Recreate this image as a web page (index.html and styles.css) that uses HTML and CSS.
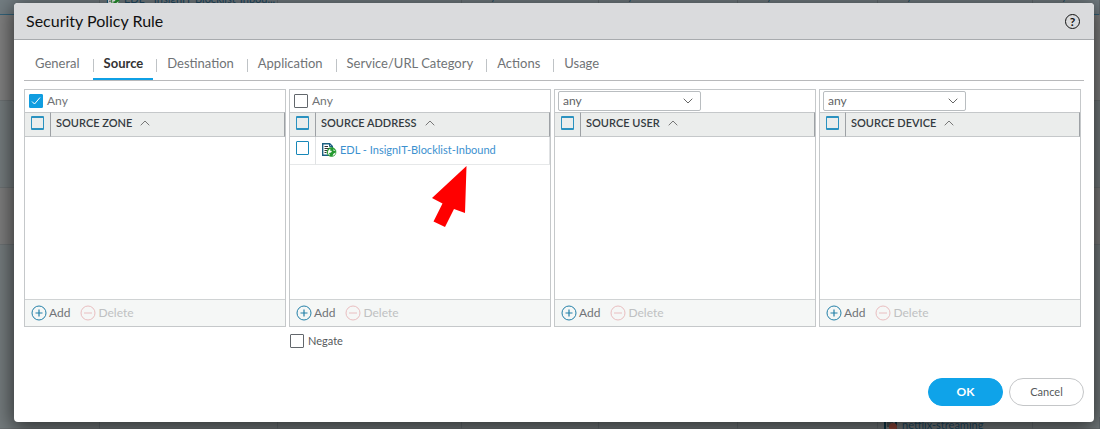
FILE: index.html
```
<!DOCTYPE html>
<html lang="en">
<head>
<meta charset="utf-8">
<meta name="viewport" content="width=device-width, initial-scale=1">
<title>Security Policy Rule</title>
<link rel="stylesheet" href="styles.css">
</head>
<body>
<svg class="sprite" aria-hidden="true">
  <symbol id="caret-up" viewBox="0 0 10 6"><path d="M.7 5.3 5 1l4.300 4.300" fill="none" stroke="currentColor"/></symbol>
  <symbol id="plus" viewBox="0 0 16 16"><circle cx="8" cy="8" r="7" fill="none" stroke="currentColor"/><path d="M4.500 8h7M8 4.500v7" fill="none" stroke="currentColor" stroke-width="1.200"/></symbol>
  <symbol id="minus" viewBox="0 0 16 16"><circle cx="8" cy="8" r="7" fill="none" stroke="currentColor"/><path d="M4 8h8" fill="none" stroke="currentColor"/></symbol>
  <symbol id="list-globe" viewBox="0 0 16 16">
    <path d="M1.700 1.700h7l2.600 2.600v9H1.700z" fill="#fff" stroke="#1a5f80" stroke-width="1.400"/>
    <path d="M8.500 1.500v3h3" fill="none" stroke="#1a5f80"/>
    <path d="M3.500 4.500h3.500M3.500 6.500h5M3.500 8.500h3M3.500 10.500h2" stroke="#333" fill="none"/>
    <circle cx="10.500" cy="10" r="4.500" fill="#249a2f" stroke="#249a2f" stroke-width=".6"/>
    <path d="M7 10.500c0-2 1-3.200 2.500-3.700L9 8.500l2 .5-1 1.500-2 .5 1 2.500C7.700 13 7 12 7 10.500zM12.500 7l1.700 2-1.700-.3zM11.500 13.800l1-2 2-1.300c0 1.700-1.300 3-3 3.300z" fill="#fff"/>
  </symbol>
</svg>

<div class="backdrop" aria-hidden="true">
  <div class="row row-top">
    <span></span><span></span><span class="cut"><svg class="doc"><use href="#list-globe"/></svg>EDL - InsignIT-Blocklist-Inbou...</span><span>any</span><span>any</span><span>any</span><span>any</span><span>any</span>
  </div>
  <div class="row row-a"></div>
  <div class="row row-b"></div>
  <div class="row row-c"></div>
  <div class="row row-d"></div>
  <div class="row row-end">
    <span></span><span></span><span></span><span></span><span></span><span></span><span class="app"><svg class="doc" viewBox="0 0 14 14"><path d="M1 1h11v12H1z" fill="none" stroke="#0e3648" stroke-width="2"/><path d="M3 4h6M3 6h4M3 8h3" stroke="#1d2c30"/><circle cx="9" cy="9" r="4" fill="#93483a"/></svg>netflix-streaming</span><span></span>
  </div>
</div>

<main class="dialog" role="dialog" aria-labelledby="dialog-title">
  <header class="dialog-head">
    <h1 id="dialog-title">Security Policy Rule</h1>
    <button class="help" aria-label="Help">?</button>
  </header>
  <div class="dialog-body">
    <nav class="tabs" role="tablist">
      <button class="tab" role="tab">General</button>
      <button class="tab active" role="tab" aria-selected="true">Source</button>
      <button class="tab" role="tab">Destination</button>
      <button class="tab" role="tab">Application</button>
      <button class="tab" role="tab">Service/URL Category</button>
      <button class="tab" role="tab">Actions</button>
      <button class="tab" role="tab">Usage</button>
    </nav>

    <div class="panels">
      <section class="panel">
        <div class="panel-top"><label class="any"><input type="checkbox" class="check" checked>Any</label></div>
        <div class="panel-list">
          <table>
            <thead><tr><th class="pick"><input type="checkbox" class="check blue" aria-label="Select all zones"></th><th><span class="sort">Source Zone<svg><use href="#caret-up"/></svg></span></th></tr></thead>
          </table>
        </div>
        <footer class="panel-foot"><button class="add"><svg><use href="#plus"/></svg>Add</button><button class="delete" disabled><svg><use href="#minus"/></svg>Delete</button></footer>
      </section>

      <section class="panel">
        <div class="panel-top"><label class="any"><input type="checkbox" class="check">Any</label></div>
        <div class="panel-list">
          <table>
            <thead><tr><th class="pick"><input type="checkbox" class="check blue" aria-label="Select all addresses"></th><th><span class="sort">Source Address<svg><use href="#caret-up"/></svg></span></th></tr></thead>
            <tbody><tr><td class="pick"><input type="checkbox" class="check blue" aria-label="Select EDL - InsignIT-Blocklist-Inbound"></td><td><a class="entry" href="#"><svg><use href="#list-globe"/></svg>EDL - InsignIT-Blocklist-Inbound</a></td></tr></tbody>
          </table>
          <svg class="pointer" viewBox="0 0 36 63" aria-hidden="true"><path d="M34.500 1 33 48l-11-4-9 18-11.500-5.500 9-18L0 33z" fill="#f00"/></svg>
        </div>
        <footer class="panel-foot"><button class="add"><svg><use href="#plus"/></svg>Add</button><button class="delete" disabled><svg><use href="#minus"/></svg>Delete</button></footer>
      </section>

      <section class="panel">
        <div class="panel-top"><select aria-label="Source user match"><option>any</option></select></div>
        <div class="panel-list">
          <table>
            <thead><tr><th class="pick"><input type="checkbox" class="check blue" aria-label="Select all users"></th><th><span class="sort">Source User<svg><use href="#caret-up"/></svg></span></th></tr></thead>
          </table>
        </div>
        <footer class="panel-foot"><button class="add"><svg><use href="#plus"/></svg>Add</button><button class="delete" disabled><svg><use href="#minus"/></svg>Delete</button></footer>
      </section>

      <section class="panel">
        <div class="panel-top"><select aria-label="Source device match"><option>any</option></select></div>
        <div class="panel-list">
          <table>
            <thead><tr><th class="pick"><input type="checkbox" class="check blue" aria-label="Select all devices"></th><th><span class="sort">Source Device<svg><use href="#caret-up"/></svg></span></th></tr></thead>
          </table>
        </div>
        <footer class="panel-foot"><button class="add"><svg><use href="#plus"/></svg>Add</button><button class="delete" disabled><svg><use href="#minus"/></svg>Delete</button></footer>
      </section>

      <label class="negate"><input type="checkbox" class="check">Negate</label>
    </div>

    <div class="actions">
      <button class="btn primary">OK</button>
      <button class="btn">Cancel</button>
    </div>
  </div>
</main>
</body>
</html>
```
FILE: styles.css
```
* { box-sizing: border-box; }

body {
  margin: 0;
  min-height: 100vh;
  padding: 3px 6px 7px 14px;
  position: relative;
  overflow: hidden;
  font-family: Lato, "Liberation Sans", sans-serif;
  font-size: 12px;
  line-height: 16px;
  color: #707376;
}

button, input, select { font: inherit; color: inherit; margin: 0; }
button { border: 0; padding: 0; background: none; cursor: pointer; }
.sprite { position: absolute; width: 0; height: 0; }

/* Dimmed rule list behind the dialog */
.backdrop {
  position: absolute;
  inset: 0;
  display: flex;
  flex-direction: column;
  overflow: hidden;
  color: #204a64;
  font-size: 11px;
}
.row {
  display: grid;
  grid-template-columns: 100px 178px 184px 137px 139px 140px 155px 1fr;
  border-bottom: 1px solid #6c7173;
}
.row span { border-right: 1px solid #656d71; padding-left: 17px; white-space: nowrap; }
.row-top { height: 15px; background: #737d82; border-bottom-color: #32627a; }
.row-top span { margin-top: -12px; padding-bottom: 12px; }
.row-top .cut { margin-left: -178px; padding-left: 6px; }
.row-a { height: 86px; background: #808080; }
.row-b { height: 87px; background: #747b7d; }
.row-c { height: 57px; background: #7d7d7d; }
.row-d { flex: 1; background: #747b7d; border: 0; }
.row-end { height: 12px; background: #747b7d; }
.row-end span { padding-left: 6px; height: 20px; }
.doc { width: 14px; height: 14px; margin-right: 4px; vertical-align: -3px; }

.dialog {
  position: relative;
  border-radius: 4px;
  background: #fff;
  box-shadow: 0 4px 20px 2px rgba(0, 0, 0, 0.6);
}
.dialog-head {
  display: flex;
  align-items: center;
  justify-content: space-between;
  height: 37px;
  padding: 0 14px 0 12px;
  border-bottom: 1px solid #a8abae;
  border-radius: 4px 4px 0 0;
  background: #dadbdd;
}
h1 { margin: 0; font-size: 16px; line-height: 20px; font-weight: 400; color: #111; }
.help {
  width: 15px;
  height: 15px;
  border: 1px solid #111;
  border-radius: 50%;
  font-size: 12px;
  line-height: 13px;
  font-weight: 700;
  color: #111;
}
.dialog-body { padding: 0 10px 16px; }

.tabs { display: flex; height: 41px; align-items: flex-end; border-bottom: 1px solid #b8b9bb; }
.tab {
  position: relative;
  height: 35px;
  padding: 0 13px 0 11px;
  font-size: 13px;
  line-height: 20px;
}
.tab + .tab::before {
  content: "";
  position: absolute;
  left: 0;
  top: 14px;
  width: 1px;
  height: 13px;
  background: #bfc3c6;
}
.tab.active { font-weight: 700; color: #333; }
.tab.active::after {
  content: "";
  position: absolute;
  left: 0;
  right: 3px;
  bottom: 0;
  height: 2px;
  background: #0fa0e5;
}

.panels {
  display: grid;
  grid-template-columns: repeat(4, 1fr);
  gap: 7px 3px;
  margin: 8px 3px 0 0;
}
.panel { display: flex; flex-direction: column; border: 1px solid #c5c8ca; }
.panel-top { display: flex; height: 22px; padding: 1px 3px; }
.any, .negate { display: flex; align-items: center; gap: 4px; }
.any { padding-left: 1px; }
.negate { grid-column: 2; padding-left: 1px; font-size: 11px; line-height: 14px; color: #55595c; }

.check {
  appearance: none;
  flex: none;
  display: block;
  width: 14px;
  height: 14px;
  border: 1px solid #62676c;
  border-radius: 1px;
  background: #fff;
}
.check:checked {
  border-color: #109de0;
  background: #109de0 url("data:image/svg+xml,%3Csvg xmlns='http://www.w3.org/2000/svg' viewBox='0 0 12 12'%3E%3Cpath d='M2 6.500 4.500 9 10 2.500' fill='none' stroke='white'/%3E%3C/svg%3E");
}
.check.blue { width: 13px; border-color: #1787b8; background: transparent; }
th .check.blue { border-top-width: 2px; border-bottom-width: 2px; border-color: #2b92c0; }

select {
  appearance: none;
  width: 143px;
  height: 20px;
  padding: 0 4px;
  border: 1px solid #b9bdc0;
  border-radius: 2px;
  color: #5f6265;
  background: #fff url("data:image/svg+xml,%3Csvg xmlns='http://www.w3.org/2000/svg' viewBox='0 0 10 6'%3E%3Cpath d='M.7.7 5 5 9.300.7' fill='none' stroke='%23666'/%3E%3C/svg%3E") no-repeat right 7px center / 10px 6px;
}

.panel-list { position: relative; height: 187px; }
table { width: 100%; border-collapse: separate; border-spacing: 0; table-layout: fixed; }
th, td { padding: 0 5px; text-align: left; }
th, th.pick {
  height: 25px;
  padding-bottom: 3px;
  border: solid #c5c8ca;
  border-width: 1px 0;
  border-right: 1px solid #9da1a5;
  background: #ebedec;
  color: #333a40;
  font-size: 11px;
  font-weight: 600;
  text-transform: uppercase;
}
td { height: 28px; padding-bottom: 1px; border-right: 1px solid #e0e2e4; border-bottom: 1px solid #e6e8e9; }
.pick { width: 26px; padding: 0 6px; }
td.pick { padding-bottom: 5px; }
.sort { display: flex; align-items: center; gap: 8px; }
.sort svg { width: 10px; height: 6px; color: #777; }
.entry { display: flex; align-items: center; gap: 3px; color: #3c91cf; font-size: 11px; text-decoration: none; white-space: nowrap; }
.entry svg { width: 16px; height: 16px; flex: none; }

/* Callout arrow that lies over the list */
.pointer { position: absolute; left: 142px; top: 53px; width: 36px; height: 63px; }

.panel-foot {
  display: flex;
  gap: 10px;
  height: 27px;
  padding: 0 6px;
  border-top: 1px solid #d0d3d4;
  background: #f5f7f6;
}
.panel-foot button { display: flex; align-items: center; gap: 2px; }
.panel-foot svg { width: 16px; height: 16px; color: #2380a8; }
.panel-foot .delete { color: #bfc1c2; }
.panel-foot .delete svg { color: #e9bec0; }

.actions { display: flex; justify-content: flex-end; gap: 6px; margin-top: 30px; }
.btn {
  width: 75px;
  height: 28px;
  border: 1px solid #c4c6c8;
  border-radius: 14px;
  font-size: 11px;
  color: #55595c;
}
.primary { border-color: #0fa3e9; background: #0fa3e9; color: #fff; font-size: 12px; font-weight: 700; }
.row-top .cut { margin-top: -9px; }
```
